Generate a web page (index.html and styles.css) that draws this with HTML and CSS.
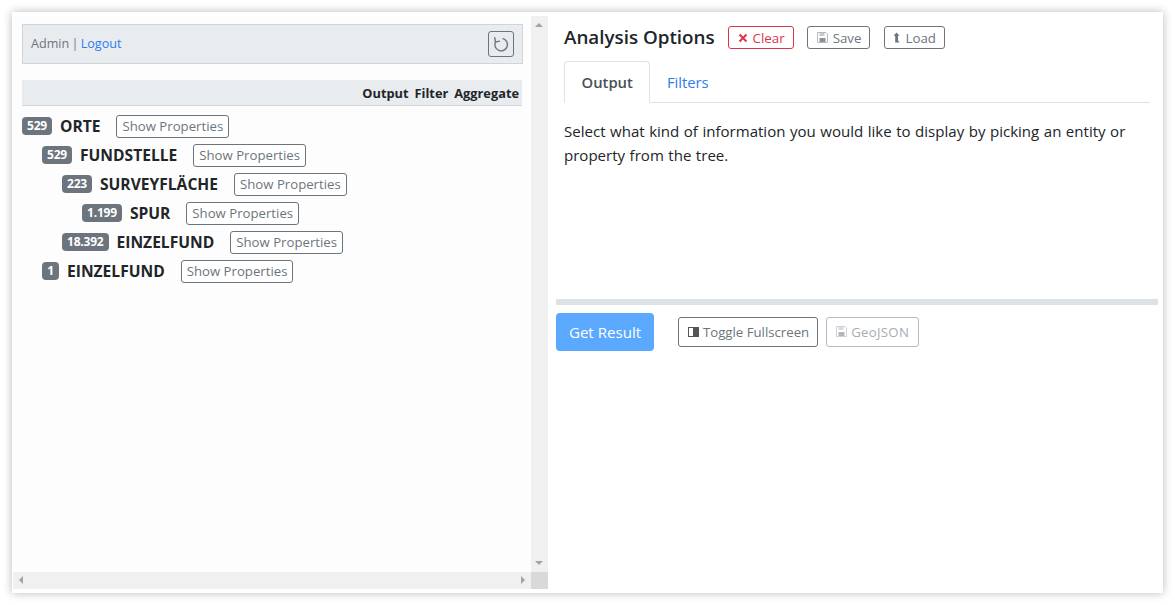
FILE: index.html
```html
<!DOCTYPE html>
<html lang="en">
<head>
<meta charset="utf-8">
<title>Analysis Options</title>
<link rel="stylesheet" href="styles.css">
</head>
<body>
<div class="app">
  <section class="left">
    <div class="left-main">
      <div class="tree-pane">
        <div class="userbar">
          <span class="user">Admin | <a href="#" class="link">Logout</a></span>
          <button class="refresh" type="button">
            <svg width="18" height="18" viewBox="0 0 18 18" fill="none" stroke="#6c757d" stroke-width="1.4"><path d="M10.500 3.400a6.300 6.300 0 1 1-7 3.300"/><path d="M2.600 2.200l.9 4.800 4.500-.9"/></svg>
          </button>
        </div>
        <div class="tree-head"><span>Output</span><span>Filter</span><span>Aggregate</span></div>
        <ul class="tree">
          <li class="node"><span class="badge">529</span><b class="name">ORTE</b><button class="btn btn-sm" type="button">Show Properties</button></li>
          <li class="node l1"><span class="badge">529</span><b class="name">FUNDSTELLE</b><button class="btn btn-sm" type="button">Show Properties</button></li>
          <li class="node l2"><span class="badge">223</span><b class="name">SURVEYFLÄCHE</b><button class="btn btn-sm" type="button">Show Properties</button></li>
          <li class="node l3"><span class="badge">1.199</span><b class="name">SPUR</b><button class="btn btn-sm" type="button">Show Properties</button></li>
          <li class="node l2"><span class="badge">18.392</span><b class="name">EINZELFUND</b><button class="btn btn-sm" type="button">Show Properties</button></li>
          <li class="node l1"><span class="badge">1</span><b class="name">EINZELFUND</b><button class="btn btn-sm" type="button">Show Properties</button></li>
        </ul>
      </div>
      <div class="vbar"><i class="arrow up"></i><i class="arrow down"></i></div>
    </div>
    <div class="hbar"><div class="htrack"><i class="arrow lft"></i><i class="arrow rgt"></i></div><div class="corner"></div></div>
  </section>
  <section class="right">
    <div class="options">
      <div class="title-row">
        <h1 class="title">Analysis Options</h1>
        <button class="btn btn-red" type="button"><svg class="ico" width="10" height="10" viewBox="0 0 10 10"><path d="M1.500 1.500l7 7M8.500 1.500l-7 7" stroke="#dc3545" stroke-width="2"/></svg>Clear</button>
        <button class="btn" type="button"><svg class="ico" width="11" height="11" viewBox="0 0 11 11"><use href="#floppy"/></svg>Save</button>
        <button class="btn btn-load" type="button"><svg class="ico" width="7" height="11" viewBox="0 0 7 11"><path d="M3.500 .5L6.500 3.800H5V8.500L6.500 10.500H2.200V3.800H.5z" fill="#6c757d"/></svg>Load</button>
      </div>
      <div class="tabs"><span class="tab active">Output</span><span class="tab link">Filters</span></div>
      <p class="hint">Select what kind of information you would like to display by picking an entity or property from the tree.</p>
    </div>
    <div class="divider"></div>
    <div class="actions">
      <button class="btn-primary" type="button">Get Result</button>
      <button class="btn btn-md" type="button"><svg class="ico" width="11" height="10" viewBox="0 0 11 10"><rect x=".5" y=".5" width="10" height="9" fill="#fff" stroke="#555"/><rect x="5" y="1" width="5" height="8" fill="#555"/></svg>Toggle Fullscreen</button>
      <button class="btn btn-md off" type="button"><svg class="ico" width="11" height="11" viewBox="0 0 11 11"><use href="#floppy"/></svg>GeoJSON</button>
    </div>
  </section>
</div>
<svg class="defs" width="0" height="0"><defs><g id="floppy"><path d="M.5.5h8.500l1.500 1.500v8.500h-10z" fill="#fff" stroke="#b5babf"/><rect x="2.500" y="1" width="5" height="3" fill="#c4c8cc"/><rect x="2.500" y="6" width="6" height="4" fill="#8b9197"/></g></defs></svg>
</body>
</html>
```

FILE: styles.css
```css
* { box-sizing: border-box; }
html, body { margin: 0; height: 100%; background: #fff; overflow: hidden; }
body { padding: 12px; font-family: "Open Sans", "Noto Sans", sans-serif; color: #212529; }
.app {
  width: 1151px; height: 581px; display: flex; background: #fff;
  box-shadow: 0 0 9px rgba(0, 0, 0, .28);
}
button { font-family: inherit; }
.link { color: #2f7bf0; text-decoration: none; }

.left { width: 536px; display: flex; flex-direction: column; padding: 4px 0 4px 1px; }
.left-main { flex: 1; display: flex; min-height: 0; }
.tree-pane { flex: 1; padding: 8px 8px 0 9px; background: #fdfdfd; }
.userbar {
  height: 40px; width: 501px; display: flex; align-items: center; justify-content: space-between;
  padding: 0 8px; background: #e9ecef; border: 1px solid #ced4da;
}
.user { font-size: 12.600px; color: #6c757d; position: relative; top: -1px; word-spacing: -1px; }
.refresh {
  width: 26px; height: 26px; padding: 0; display: flex; align-items: center; justify-content: center;
  background: transparent; border: 1px solid #6c757d; border-radius: 3px;
}
.tree-head {
  height: 26px; width: 500px; margin-top: 16px; display: flex; justify-content: flex-end; align-items: center; gap: 6px;
  padding: 1px 3px 0 0; background: #e9ecef; border-bottom: 1px solid #d3d7db;
  font-size: 12.800px; font-weight: 700; color: #212529;
}
.tree { list-style: none; margin: 5px 0 0; padding: 0; }
.node { height: 29px; display: flex; align-items: center; }
.l1 { padding-left: 20px; }
.l2 { padding-left: 40px; }
.l3 { padding-left: 60px; }
.badge {
  height: 18px; min-width: 17px; padding: 0 5px; border-radius: 4px; background: #6c757d; color: #fff;
  font-size: 12px; font-weight: 700; line-height: 18px; text-align: center; letter-spacing: -.2px;
}
.name { margin: 0 16px 0 8px; font-size: 15.600px; font-weight: 700; color: #212529; }
.btn {
  height: 23px; padding: 0 8px 0 9px; display: inline-flex; align-items: center; gap: 5px;
  background: #fff; border: 1px solid #6c757d; border-radius: 3px; color: #6c757d;
  font-size: 13.300px; white-space: nowrap;
}
.btn-sm { padding: 0 5px; margin-top: 1px; font-size: 13.200px; }
.btn-red { border-color: #dc3545; color: #dc3545; }
.btn-load { padding: 0 8px; }
.vbar { width: 17px; background: #f0f0f0; position: relative; }
.hbar { height: 17px; display: flex; }
.htrack { flex: 1; background: #f0f0f0; position: relative; }
.corner { width: 17px; background: #d9d9d9; }
.arrow { position: absolute; width: 0; height: 0; border-style: solid; border-color: transparent; }
.up { top: 7px; left: 4px; border-width: 0 4px 4px; border-bottom-color: #a3a3a3; }
.down { bottom: 7px; left: 4px; border-width: 4px 4px 0; border-top-color: #a3a3a3; }
.lft { left: 6px; top: 4px; border-width: 4px 4px 4px 0; border-right-color: #a3a3a3; }
.rgt { right: 6px; top: 4px; border-width: 4px 0 4px 4px; border-left-color: #a3a3a3; }

.right { flex: 1; display: flex; flex-direction: column; padding-top: 14px; }
.options { height: 273px; padding: 0 13px 0 16px; }
.title-row { display: flex; align-items: center; height: 23px; }
.title { margin: -1px 13px 0 0; font-size: 18.800px; font-weight: 600; color: #212529; line-height: 23px; }
.title-row .btn + .btn { margin-left: 13px; }
.title-row .btn + .btn-load { margin-left: 14px; }
.tabs { display: flex; margin-top: 12px; height: 42px; border-bottom: 1px solid #dee2e6; }
.tab { height: 42px; padding: 0 16.500px; display: flex; align-items: center; font-size: 14.800px; }
.tab.active {
  color: #495057; font-weight: 600; background: #fff;
  border: 1px solid #dee2e6; border-bottom-color: #fff; border-radius: 4px 4px 0 0;
}
.hint { margin: 16px 0 0; font-size: 15.050px; word-spacing: .6px; line-height: 24px; color: #212529; }
.divider { height: 6px; margin: 0 5px 0 8px; background: #dee2e6; }
.actions { display: flex; align-items: center; margin: 8px 0 0 8px; }
.btn-primary {
  width: 98px; height: 38px; background: #5aa9ff; color: #fff; border: 0; border-radius: 4px; font-size: 15.100px;
}
.btn-md { height: 30px; padding: 0 8px 0 9px; margin-left: 8px; font-size: 13.200px; gap: 4px; margin-top: -1px; }
.btn-primary + .btn-md { margin-left: 24px; }
.btn-md.off { padding-right: 9px; color: #a6acb2; border-color: #b6bbc0; letter-spacing: .3px; }
.off .ico { opacity: .65; }
.defs { position: absolute; }
```
